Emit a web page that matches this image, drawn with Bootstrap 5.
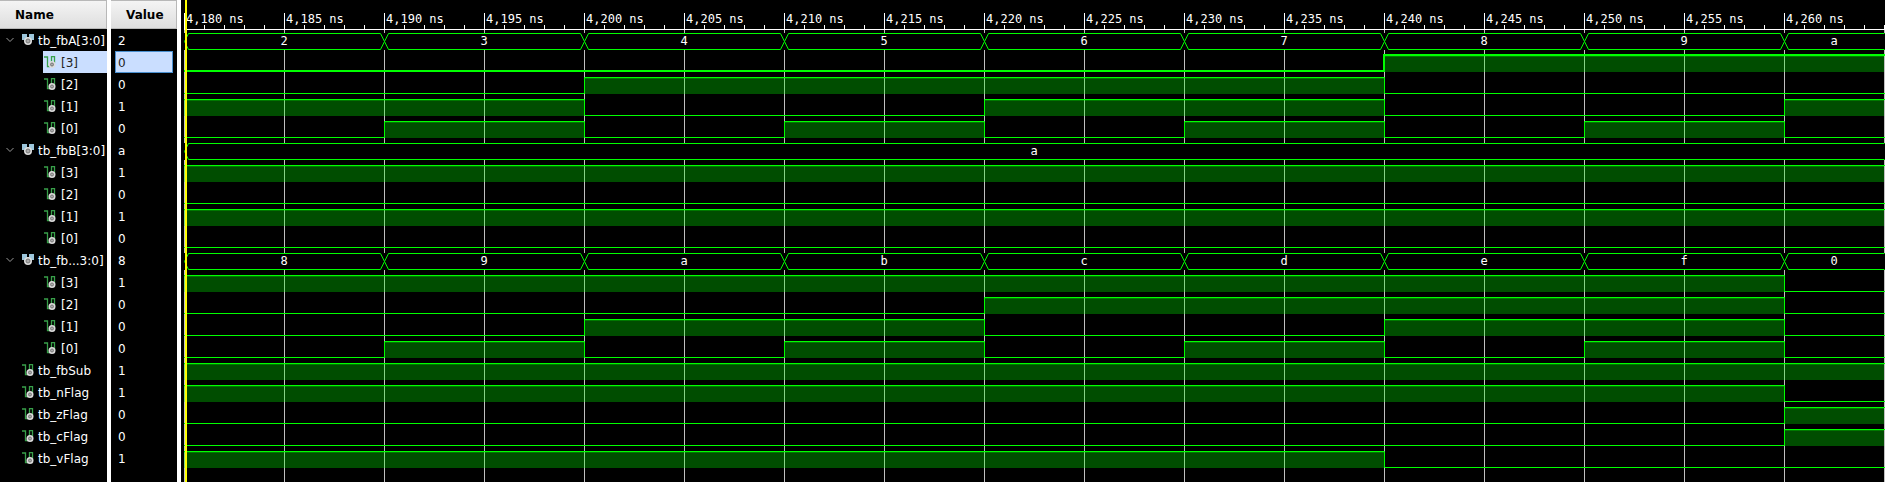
<!DOCTYPE html>
<html lang="en">
<head>
<meta charset="utf-8">
<meta name="viewport" content="width=device-width, initial-scale=1">
<title>Waveform</title>
<link href="https://cdn.jsdelivr.net/npm/bootstrap@5.3.0/dist/css/bootstrap.min.css" rel="stylesheet">
<style>
body{background:#000;color:#fff;font:12px/20px "DejaVu Sans",sans-serif}
.signals{border-collapse:separate;border-spacing:0;table-layout:fixed;width:181px}
.signals th,.signals td{padding:0;border-right:4px solid #fff}
.signals th{height:29px;color:#000}
.name-col{width:111px}
.head{height:29px;padding:4px 0 4px 15px;border:1px solid #b8b8b8;border-left:0;background:linear-gradient(#f4f4f4,#dedede)}
.signals td{height:22px}
.sig{height:22px;overflow:hidden;white-space:nowrap}
.sig span{padding-top:2px}
.bus{padding-left:6px}
.bus button{width:16px;height:22px}
.scalar{padding-left:22px}
.bit{margin-left:43px;padding-left:1px}
.sig .ico{margin-right:4px}
.bit .ico{margin-right:5px}
.val{padding-left:7px}
.picked .sig{background:#cadeff;color:#222}
.picked .val{margin:0 4px;padding-left:2px;border:1px solid #4a90d0}
.waves{min-width:0;background:linear-gradient(90deg,#c0c0c0 1px,transparent 1px) 3px 30px/100px 100% repeat-x}
.waves svg{width:100%;height:469px}
.waves text{font:12px "DejaVu Sans Mono",monospace;fill:#fff}
.marker{left:4px;width:2px;background:#ff0}
</style>
</head>
<body>
<svg width="0" height="0" class="position-absolute" aria-hidden="true">
<symbol id="i-bus" viewBox="0 0 12 12"><path d="M0 0h5v3h2V0h5v6h-2L9 8H3L2 6H0z" fill="#9cc6dc"/><circle cx="6" cy="7" r="4" fill="#dcdcdc"/><circle cx="6" cy="7" r="2" fill="#aaa" stroke="#777"/></symbol>
<symbol id="i-bit" viewBox="0 0 12 12"><path d="M0 1h3.5v9.500H6M7.500 7V.500h3V7" fill="none" stroke="#38a04a" stroke-width="1.300"/><circle cx="8" cy="8.500" r="3.500" fill="#dcdcdc"/><circle cx="8" cy="8.500" r="1.500" fill="#aaa" stroke="#777"/></symbol>
</svg>
<main class="d-flex min-vh-100">
<table class="signals flex-shrink-0 vh-100">
<thead><tr><th class="name-col" scope="col"><div class="head">Name</div></th><th scope="col"><div class="head">Value</div></th></tr></thead>
<tbody id="rows"></tbody>
<tfoot><tr><td></td><td></td></tr></tfoot>
</table>
<section class="waves flex-grow-1 position-relative overflow-hidden" aria-label="Waveforms">
<svg class="d-block" id="plot"></svg>
<div class="marker position-absolute top-0 bottom-0"></div>
</section>
</main>
<script src="https://cdn.jsdelivr.net/npm/bootstrap@5.3.0/dist/js/bootstrap.bundle.min.js"></script>
<script>
const START = 4180, END = 4265, STEP = 10, ROW = 22, HEAD = 29;
const A = [2,3,4,5,6,7,8,9,10], B = Array(9).fill(10), C = [8,9,10,11,12,13,14,15,0];
const signals = [];
function addBus(name, values, picked) {
  signals.push({kind: 'bus', name, values});
  for (let b = 3; b >= 0; b--)
    signals.push({kind: 'bit', name: `[${b}]`, values: values.map(v => v >> b & 1), picked: b === picked});
}
addBus('tb_fbA[3:0]', A, 3);
addBus('tb_fbB[3:0]', B);
addBus('tb_fb...3:0]', C);
[['tb_fbSub','111111111'],['tb_nFlag','111111110'],['tb_zFlag','000000001'],['tb_cFlag','000000001'],['tb_vFlag','111111000']]
  .forEach(([name, bits]) => signals.push({kind: 'scalar', name, values: [...bits].map(Number)}));

const icon = id => `<svg class="ico flex-shrink-0" width="12" height="12" aria-hidden="true"><use href="#${id}"/></svg>`;
const chevron = '<button type="button" class="btn p-0 border-0 d-flex align-items-center flex-shrink-0" aria-label="Collapse"><svg width="8" height="6"><path d="M.5 1 4 4.500 7.500 1" fill="none" stroke="#999"/></svg></button>';
document.getElementById('rows').innerHTML = signals.map(s =>
  `<tr class="${s.picked ? 'picked' : ''}"><td><div class="sig d-flex align-items-center ${s.kind}">${s.kind === 'bus' ? chevron + icon('i-bus') : icon('i-bit')}<span>${s.name}</span></div></td>` +
  `<td><div class="sig d-flex align-items-center val"><span>${s.values[0].toString(16)}</span></div></td></tr>`).join('');

const xAt = t => 3 + (Math.min(t, END) - START) * 20;
/* merge equal neighbouring samples into runs */
function runs(values) {
  const out = [];
  values.forEach((v, i) => {
    const last = out[out.length - 1];
    if (last && last.v === v) last.to = xAt(START + (i + 1) * STEP);
    else out.push({v, from: xAt(START + i * STEP), to: xAt(START + (i + 1) * STEP)});
  });
  return out;
}
let art = `<path d="M3 29.5H1704" stroke="#fff"/>`;
for (let t = START; t <= END; t++) {
  const x = xAt(t), major = t % 5 === 0;
  art += `<path d="M${x + .5} ${major && t < END ? 13 : 25}V29" stroke="#fff"/>`;
  if (major && t < END) art += `<text x="${x + 2}" y="23">${t.toLocaleString('en-US')} ns</text>`;
}
signals.forEach((s, i) => {
  const y = HEAD + i * ROW, list = runs(s.values);
  if (s.kind === 'bus') {
    art += `<rect x="3" y="${y + 4}" width="1701" height="17" fill="#000"/>`;
    list.forEach((r, k) => {
      const a = r.from + .5, b = r.to + .5, open = k === list.length - 1, e = open ? b : b - 4;
      const top = y + 4.5, mid = y + 12.5, low = y + 20.5;
      art += `<path d="M${e} ${top}H${a + 4}L${a} ${mid}L${a + 4} ${low}H${e}${open ? '' : `L${b} ${mid}L${e} ${top}`}" fill="none" stroke="#0f0"/>`;
      art += `<text x="${(r.from + r.to) / 2}" y="${y + 16}" text-anchor="middle">${r.v.toString(16)}</text>`;
    });
    return;
  }
  const o = s.picked ? 0 : .5;
  let d = '';
  list.forEach(r => {
    if (r.v) art += `<rect x="${r.from}" y="${y + 5}" width="${r.to - r.from}" height="16" fill="#0f0" fill-opacity=".3"/><rect x="${r.from}" y="${y + 5}" width="${r.to - r.from}" height="1" fill="#0f0" fill-opacity=".25"/>`;
    const level = y + (r.v ? 4 : 20) + o;
    d += (d ? `H${r.from + o}V${level}` : `M3 ${level}`);
  });
  art += `<path d="${d}H1704" fill="none" stroke="#0f0" stroke-width="${s.picked ? 2 : 1}"/>`;
});
document.getElementById('plot').innerHTML = art;
</script>
</body>
</html>
